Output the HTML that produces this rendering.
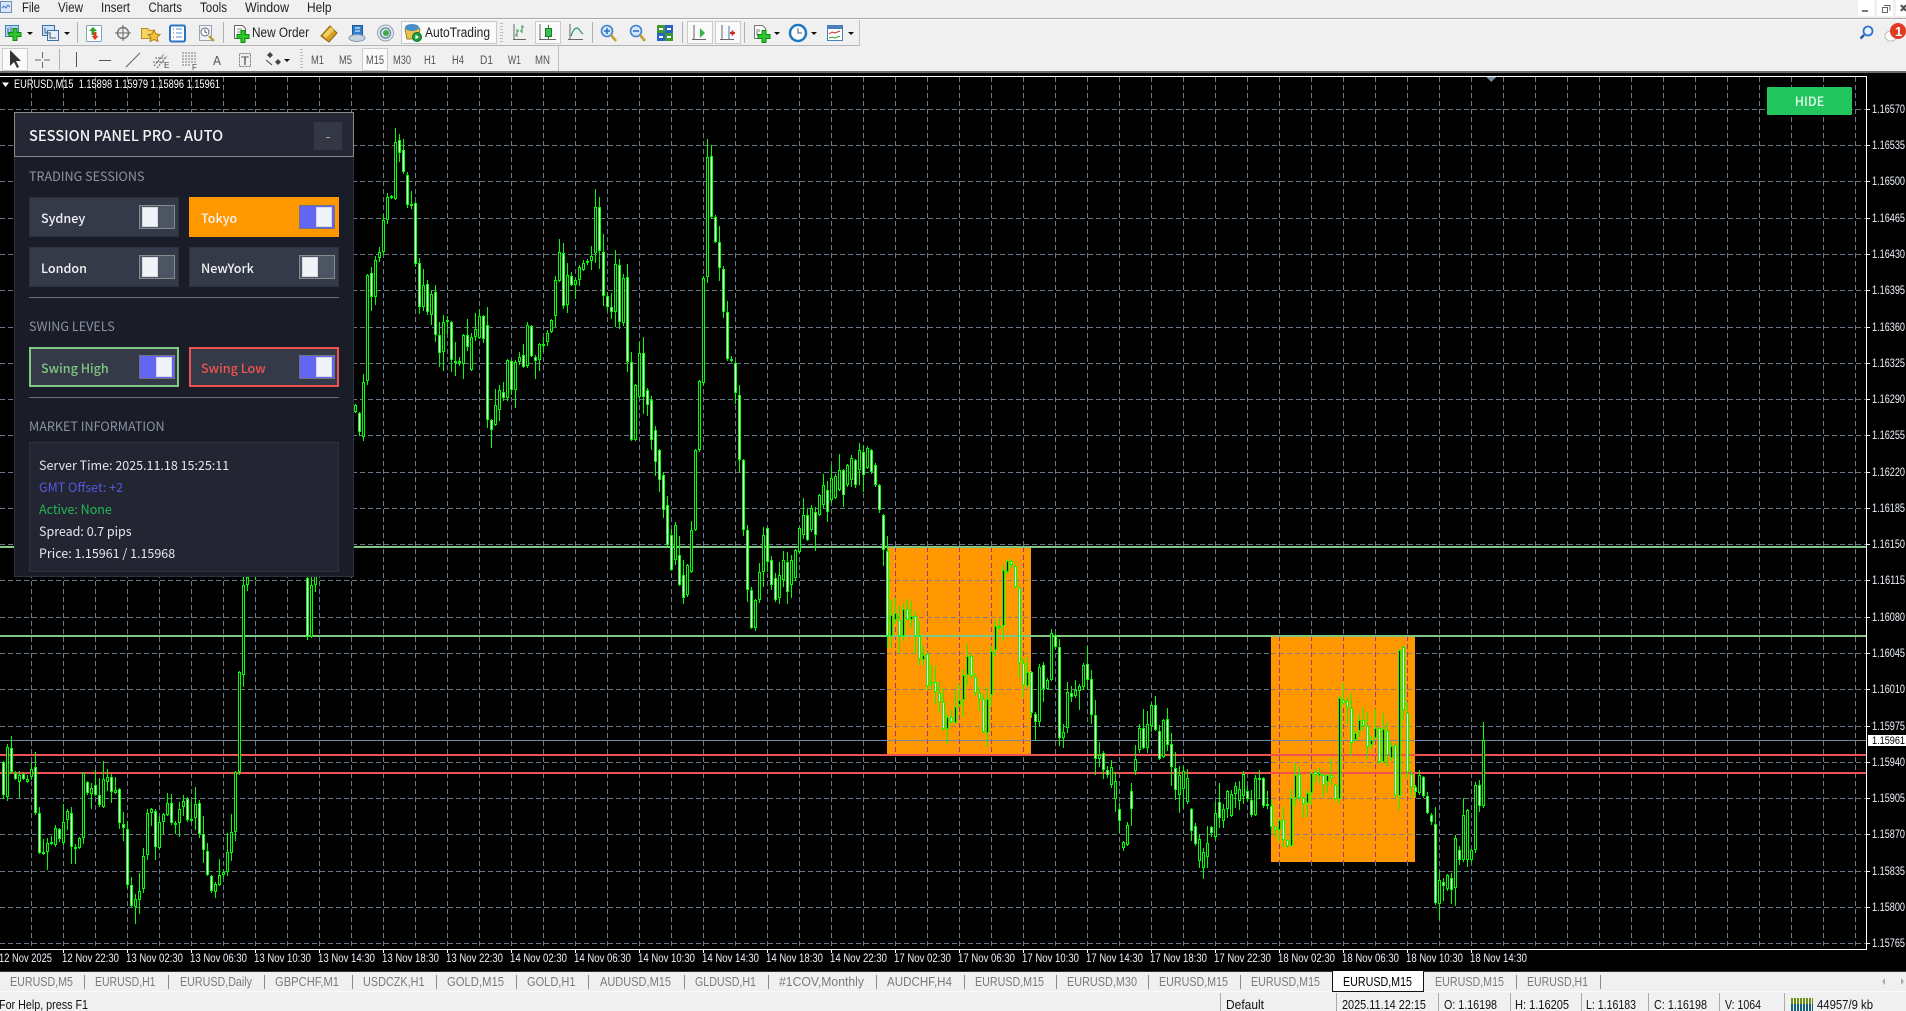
<!DOCTYPE html>
<html><head><meta charset="utf-8"><title>MetaTrader</title>
<style>
html,body{margin:0;padding:0;width:1906px;height:1011px;overflow:hidden;background:#f0f0f0}
svg{position:absolute;left:0;top:0}
svg text{font-family:"Liberation Sans",sans-serif}
.p{position:absolute;font-family:"Noto Sans CJK JP","Liberation Sans",sans-serif;white-space:nowrap;line-height:1}
.b{position:absolute;box-sizing:border-box;width:150px;height:40px;background:#353a48;border:1px solid #2d3140}
.t{position:absolute;box-sizing:border-box;width:36px;height:24px;background:#4b5563;border:1px solid #8a8a8a}
.t.on{background:#6366f1;border-color:#717384}
.t i{position:absolute;left:2px;top:1px;width:16px;height:20px;background:#f1f4f7;box-sizing:border-box;border:1px solid #d6dae0}
.t.on i{left:16px}
.l{position:absolute;left:29px;width:310px;height:1px;background:#6e6f72}
.h{font-size:12.6px;color:#8b93a3;left:29px}
.n{font-size:12.6px;font-weight:500;color:#f1f3f6}
.i{font-size:12.5px;color:#e5e7eb;left:39px}
</style></head>
<body>
<svg width="1906" height="1011" viewBox="0 0 1906 1011" xmlns="http://www.w3.org/2000/svg">
<defs>
<g id="plus"><path d="M-2-6h4v4h4v4h-4v4h-4v-4h-4v-4h4z" fill="#2fc62f" stroke="#0c8a0c"/></g>
<path id="dd" d="M0 0h6l-3 3z" fill="#111"/>
<pattern id="stg" width="3" height="3" patternUnits="userSpaceOnUse"><rect width="2" height="3" fill="#6f8f12"/></pattern>
<pattern id="stb" width="3" height="3" patternUnits="userSpaceOnUse"><rect width="2" height="3" fill="#14607a"/></pattern>
</defs>
<rect width="1906" height="1011" fill="#f0f0f0"/>
<!-- top chrome -->
<g shape-rendering="crispEdges">
<rect x="0" y="18" width="1906" height="1" fill="#a8a8a8"/>
<rect x="0" y="19" width="1906" height="1" fill="#fbfbfb"/>
<rect x="0" y="45" width="860" height="1" fill="#b4b4b4"/>
<rect x="859" y="20" width="1" height="26" fill="#c0c0c0"/>
<rect x="558" y="46" width="1" height="26" fill="#c0c0c0"/>
<rect x="0" y="71" width="1906" height="2" fill="#6c6c6c"/>
<rect x="1858" y="0" width="16" height="16" fill="#fff"/>
<rect x="1877" y="0" width="16" height="16" fill="#fff"/>
<rect x="1896" y="0" width="10" height="16" fill="#fff"/>
<rect x="1862" y="10" width="6" height="2" fill="#777"/>
<path d="M1884 5.500h6v5M1882.500 7.500h5v5h-5z" fill="none" stroke="#666"/>
<path d="M1901 5l5 6M1906 5l-5 6" stroke="#555" stroke-width="2"/>
</g>
<!-- app icon -->
<rect x="0.500" y="1.500" width="11" height="11" fill="#d8e6f6" stroke="#6a8fbf"/>
<path d="M2 8l2-2 2 2 2-3 2 2" fill="none" stroke="#3c78c0"/>
<g font-size="13.500" fill="#222">
<text x="22" y="12" textLength="18" lengthAdjust="spacingAndGlyphs">File</text>
<text x="58" y="12" textLength="25" lengthAdjust="spacingAndGlyphs">View</text>
<text x="101" y="12" textLength="29" lengthAdjust="spacingAndGlyphs">Insert</text>
<text x="148.500" y="12" textLength="33.500" lengthAdjust="spacingAndGlyphs">Charts</text>
<text x="200" y="12" textLength="27" lengthAdjust="spacingAndGlyphs">Tools</text>
<text x="245" y="12" textLength="44" lengthAdjust="spacingAndGlyphs">Window</text>
<text x="307" y="12" textLength="24.500" lengthAdjust="spacingAndGlyphs">Help</text>
</g>
<!-- toolbar 1 -->
<g shape-rendering="crispEdges" fill="#b0b0b0">
<rect x="77" y="22" width="1" height="21"/><rect x="223" y="22" width="1" height="21"/><rect x="592" y="22" width="1" height="21"/><rect x="682" y="22" width="1" height="21"/><rect x="744" y="22" width="1" height="21"/>
<rect x="59" y="49" width="1" height="21"/>
</g>
<g fill="#bdbdbd"><path d="M500 23h3v1h-3zM500 26h3v1h-3zM500 29h3v1h-3zM500 32h3v1h-3zM500 35h3v1h-3zM500 38h3v1h-3zM500 41h3v1h-3z"/><path d="M300 49h3v1h-3zM300 52h3v1h-3zM300 55h3v1h-3zM300 58h3v1h-3zM300 61h3v1h-3zM300 64h3v1h-3zM300 67h3v1h-3z"/></g>
<!-- new chart -->
<rect x="5.500" y="25.500" width="13" height="11" fill="#bcd8f4" stroke="#3f7fbf"/><path d="M8 28v6h8M11 27v5" stroke="#35659a" fill="none"/><use href="#plus" x="15" y="34.500"/>
<use href="#dd" x="27" y="32"/>
<!-- profiles -->
<rect x="42.500" y="25.500" width="12" height="10" fill="#cfe2f6" stroke="#3f6fa8"/><rect x="47.500" y="30.500" width="11" height="10" fill="#e4effa" stroke="#3f6fa8"/><path d="M45 28v5h6M50 33v5h6" stroke="#406080" fill="none"/>
<use href="#dd" x="64" y="32"/>
<!-- market watch -->
<rect x="86.500" y="25.500" width="15" height="16" rx="1" fill="#fff" stroke="#7fa0c0"/><path d="M93 27l-4 4h2.500v4h3v-4h2.500z" fill="#28a828"/><path d="M95 40l3.500-4h-2v-4h-3v4h-2z" fill="#d84020"/>
<!-- crosshair -->
<circle cx="123" cy="33" r="5.500" fill="none" stroke="#777" stroke-width="1.500"/><path d="M123 25v16M115 33h16" stroke="#666"/>
<!-- folder star -->
<path d="M141.500 28.500h6l2 2h5v8h-13z" fill="#f6d465" stroke="#b98d20"/><path d="M154 30l2 4 4 .5-3 3 1 4-4-2-4 2 1-4-3-3 4-.5z" fill="#f5c33a" stroke="#b07f1c"/>
<!-- navigator -->
<rect x="170" y="25.500" width="15" height="16" rx="1.500" fill="#fff" stroke="#2a74c8" stroke-width="2"/><path d="M173 29h1M173 33h1M173 37h1" stroke="#d04030"/><path d="M176 29h6M176 33h6M176 37h6" stroke="#5a90d0"/>
<!-- tester -->
<rect x="199.500" y="25.500" width="12" height="15" fill="#eef2f6" stroke="#98a4b0"/><circle cx="205" cy="32" r="4" fill="#fff" stroke="#667"/><path d="M205 29.500V32l2 1" stroke="#555" fill="none"/><path d="M209 36l5 5" stroke="#c59a30" stroke-width="2.500"/>
<!-- new order -->
<path d="M234.500 25.500h8l3 3v10h-11z" fill="#fff" stroke="#666"/><path d="M237 29h5M237 32h6M237 35h4" stroke="#888"/><use href="#plus" x="243" y="36.500"/>
<text x="252" y="37" font-size="13.500" fill="#222" textLength="57" lengthAdjust="spacingAndGlyphs">New Order</text>
<!-- gold -->
<path d="M321 36l9-10 7 7-8 9z" fill="#d8a020" stroke="#8a6210"/><path d="M323 35l8-8 3 3-8 8z" fill="#f2cf60"/>
<!-- metaeditor/cloud -->
<rect x="352.500" y="25.500" width="10" height="11" fill="#2f7fd0" stroke="#1c5a9c"/><path d="M355 28h5M355 31h5" stroke="#fff"/><ellipse cx="357" cy="38" rx="8" ry="3.500" fill="#c8d4e0" stroke="#8497a8"/>
<!-- signal -->
<circle cx="385.500" cy="33" r="8" fill="#dfe8ef" stroke="#8fa4b4"/><circle cx="385.500" cy="33" r="5" fill="none" stroke="#7090a8" stroke-width="1.500"/><circle cx="386" cy="33" r="3" fill="#40a848"/>
<!-- autotrading -->
<rect x="401.500" y="21.500" width="95" height="22" fill="#fafafa" stroke="#c8c8c8" shape-rendering="crispEdges"/>
<path d="M405 29c5-5 11-5 15 0l-2 10h-11z" fill="#e8c24a" stroke="#9a8024"/><ellipse cx="412" cy="27.500" rx="7" ry="3.500" fill="#4a8cc8"/><circle cx="417" cy="37" r="4.500" fill="#20a040" stroke="#0c7028"/><path d="M415.500 34.800v4.500l3.500-2.200z" fill="#fff"/>
<text x="425" y="37" font-size="13.500" fill="#222" textLength="65" lengthAdjust="spacingAndGlyphs">AutoTrading</text>
<!-- bar chart -->
<path d="M514 24v16M513 39.500h13" stroke="#666" fill="none"/><path d="M517 37v-8M515 35h2M517 31h2M522 33v-8M520 31h2M522 27h2" stroke="#2a9a4a" fill="none"/>
<rect x="535.500" y="21.500" width="25" height="22" fill="#fafafa" stroke="#cccccc" shape-rendering="crispEdges"/>
<path d="M540 24v16M539 39.500h17" stroke="#666" fill="none"/><rect x="545.500" y="28.500" width="6" height="8" fill="#38c050" stroke="#1a7a30"/><path d="M548.500 25v3M548.500 37v2" stroke="#1a7a30"/>
<path d="M570 24v16M568 39.500h15" stroke="#666" fill="none"/><path d="M571 36c2-6 4-8 6-8s3 4 6 6" stroke="#2a9a6a" fill="none" stroke-width="1.200"/>
<!-- zoom -->
<circle cx="607" cy="31" r="5.500" fill="#cfe6fb" stroke="#3f82c8" stroke-width="1.600"/><path d="M604 31h6M607 28v6" stroke="#2a6cb8" stroke-width="1.500"/><path d="M611 35l5 6" stroke="#c8a030" stroke-width="2.600"/>
<circle cx="636" cy="31" r="5.500" fill="#cfe6fb" stroke="#3f82c8" stroke-width="1.600"/><path d="M633 31h6" stroke="#2a6cb8" stroke-width="1.500"/><path d="M640 35l5 6" stroke="#c8a030" stroke-width="2.600"/>
<!-- tile -->
<rect x="657" y="25" width="8" height="8" fill="#3c9a30"/><rect x="665" y="25" width="8" height="8" fill="#2a62c8"/><rect x="657" y="33" width="8" height="8" fill="#2a62c8"/><rect x="665" y="33" width="8" height="8" fill="#3c9a30"/><path d="M659 29h4M667 29h4M659 37h4M667 37h4" stroke="#fff" stroke-width="2"/>
<!-- shift / autoscroll -->
<rect x="687.500" y="21.500" width="25" height="22" fill="#fafafa" stroke="#cccccc" shape-rendering="crispEdges"/>
<path d="M694 25v15M692 39.500h14" stroke="#666" fill="none"/><path d="M700 28v10l5-5z" fill="#39b54a"/>
<rect x="715.500" y="21.500" width="25" height="22" fill="#fafafa" stroke="#cccccc" shape-rendering="crispEdges"/>
<path d="M722 25v15M720 39.500h14" stroke="#666" fill="none"/><path d="M729 26v13" stroke="#3a78c0"/><path d="M730 33h5M732.500 30.500v5" stroke="#c83020" stroke-width="2"/>
<!-- add indicator -->
<path d="M754.500 25.500h8l3 3v10h-11z" fill="#fff" stroke="#777"/><path d="M757 29v6h5M759 29v3" stroke="#777" fill="none"/><use href="#plus" x="764" y="36.500"/><use href="#dd" x="774" y="32"/>
<!-- clock -->
<circle cx="798" cy="33" r="8" fill="#fff" stroke="#1d78c4" stroke-width="2.500"/><path d="M798 28v5h4" stroke="#556" fill="none"/><use href="#dd" x="811" y="32"/>
<!-- templates -->
<rect x="827.500" y="25.500" width="15" height="15" fill="#fff" stroke="#4a7fb8"/><rect x="828" y="26" width="14" height="3" fill="#4a80c0"/><path d="M829 34l3-2 3 1 5-2" stroke="#c83020" fill="none"/><path d="M829 38l3-1 3 1 5-2" stroke="#30a040" fill="none"/><use href="#dd" x="848" y="32"/>
<!-- toolbar 2 -->
<rect x="2.500" y="48.500" width="25" height="22" fill="#fafafa" stroke="#cccccc" shape-rendering="crispEdges"/>
<path d="M10 50v16l4-4 3 6 2-1-3-6h5z" fill="#333"/>
<path d="M42.500 52v6M42.500 62v6M35 60h6M44 60h6" stroke="#666"/>
<path d="M76.500 52v15" stroke="#555"/>
<path d="M99 60.500h12" stroke="#555"/>
<path d="M126 67l14-14" stroke="#666"/>
<path d="M154 66l10-12M157 68l10-12M153 62h12M155 58h12" stroke="#666" fill="none" stroke-dasharray="2 1"/>
<text x="164" y="68" font-size="8" fill="#444">E</text>
<path d="M182 53h14M182 56h14M182 59h14M182 62h14M182 65h8" stroke="#777" stroke-dasharray="2 1"/>
<text x="192" y="70" font-size="8" fill="#444">F</text>
<text x="213" y="65" font-size="13" fill="#555" textLength="8" lengthAdjust="spacingAndGlyphs">A</text>
<rect x="239.500" y="53.500" width="11" height="13" fill="none" stroke="#777" stroke-dasharray="2 1"/><text x="241" y="65" font-size="12" fill="#444" textLength="8" lengthAdjust="spacingAndGlyphs">T</text>
<path d="M267 55l3-3 3 3-3 3zM275 62l3-3 3 3-3 3z" fill="#444"/><path d="M266 60l6 5" stroke="#444"/>
<use href="#dd" x="284" y="59"/>
<rect x="362.500" y="48.500" width="25" height="22" fill="#fafafa" stroke="#cccccc" shape-rendering="crispEdges"/>
<g font-size="11.500" fill="#555">
<text x="311" y="64" textLength="13" lengthAdjust="spacingAndGlyphs">M1</text>
<text x="339" y="64" textLength="13" lengthAdjust="spacingAndGlyphs">M5</text>
<text x="366" y="64" textLength="18" lengthAdjust="spacingAndGlyphs">M15</text>
<text x="393" y="64" textLength="18" lengthAdjust="spacingAndGlyphs">M30</text>
<text x="424" y="64" textLength="12" lengthAdjust="spacingAndGlyphs">H1</text>
<text x="452" y="64" textLength="12" lengthAdjust="spacingAndGlyphs">H4</text>
<text x="480" y="64" textLength="13" lengthAdjust="spacingAndGlyphs">D1</text>
<text x="508" y="64" textLength="13" lengthAdjust="spacingAndGlyphs">W1</text>
<text x="535" y="64" textLength="15" lengthAdjust="spacingAndGlyphs">MN</text>
</g>
<!-- right icons -->
<circle cx="1868" cy="31" r="4.500" fill="#eef5fc" stroke="#2f74d0" stroke-width="1.800"/><path d="M1864 35l-3.500 3.500" stroke="#2558b0" stroke-width="2.500"/>
<ellipse cx="1891" cy="36" rx="6" ry="5" fill="#fff" stroke="#bbb"/><path d="M1888 40l-1 3 4-2z" fill="#ddd"/>
<circle cx="1898" cy="31" r="8" fill="#e03a20"/><text x="1895" y="36" font-size="13" fill="#fff" font-weight="bold">1</text>
<!-- chart -->
<rect x="0" y="73" width="1906" height="898" fill="#000"/>
<g shape-rendering="crispEdges">
<path id="gr" fill="none" stroke="#6a7a8a" stroke-dasharray="5 3"/>
<rect x="887" y="547" width="144" height="207" fill="#ff9800"/>
<rect x="1271" y="636" width="144" height="226" fill="#ff9800"/>
<path d="M887 580.500h144M887 617.500h144M887 653.500h144M887 689.500h144M887 726.500h144M1271 653.500h144M1271 689.500h144M1271 726.500h144M1271 762.500h144M1271 798.500h144M1271 834.500h144" stroke="#8c8078" stroke-dasharray="5 3" fill="none"/>
<path d="M895.500 547V754M927.500 547V754M959.500 547V754M991.500 547V754M1023.500 547V754M1279.500 636V862M1311.500 636V862M1343.500 636V862M1375.500 636V862M1407.500 636V862" stroke="#9a3a90" stroke-dasharray="5 3" fill="none"/>
<rect x="0" y="546" width="1866" height="2" fill="#81c784"/>
<rect x="0" y="635" width="1866" height="2" fill="#81c784"/>
<rect x="0" y="740" width="1866" height="1" fill="#778899"/>
<rect x="0" y="754" width="1866" height="2" fill="#ef5350"/>
<rect x="0" y="772" width="1866" height="2" fill="#ef5350"/>
<path id="wk" fill="none" stroke="#00ff00"/>
<path id="bd" fill="#00ff00"/>
<path id="bw" fill="#ffffff"/>
<path id="bk" fill="#000000"/>
<rect x="0" y="76" width="1867" height="1" fill="#fff"/>
<rect x="0" y="949" width="1867" height="1" fill="#fff"/>
<rect x="1866" y="76" width="1" height="874" fill="#fff"/>
<path id="tk" fill="none" stroke="#fff"/>
<path d="M1486 77h10l-5 5z" fill="#778899"/>
</g>
<path d="M2 82.500h7l-3.500 4.500z" fill="#fff"/>
<text x="14" y="88" font-size="11.500" fill="#fff" textLength="206" lengthAdjust="spacingAndGlyphs" xml:space="preserve">EURUSD,M15  1.15898 1.15979 1.15896 1.15961</text>
<!-- price axis -->
<g font-size="11.500" fill="#eef3fa">
<text x="1872" y="113" textLength="33" lengthAdjust="spacingAndGlyphs">1.16570</text>
<text x="1872" y="149" textLength="33" lengthAdjust="spacingAndGlyphs">1.16535</text>
<text x="1872" y="185" textLength="33" lengthAdjust="spacingAndGlyphs">1.16500</text>
<text x="1872" y="222" textLength="33" lengthAdjust="spacingAndGlyphs">1.16465</text>
<text x="1872" y="258" textLength="33" lengthAdjust="spacingAndGlyphs">1.16430</text>
<text x="1872" y="294" textLength="33" lengthAdjust="spacingAndGlyphs">1.16395</text>
<text x="1872" y="331" textLength="33" lengthAdjust="spacingAndGlyphs">1.16360</text>
<text x="1872" y="367" textLength="33" lengthAdjust="spacingAndGlyphs">1.16325</text>
<text x="1872" y="403" textLength="33" lengthAdjust="spacingAndGlyphs">1.16290</text>
<text x="1872" y="439" textLength="33" lengthAdjust="spacingAndGlyphs">1.16255</text>
<text x="1872" y="476" textLength="33" lengthAdjust="spacingAndGlyphs">1.16220</text>
<text x="1872" y="512" textLength="33" lengthAdjust="spacingAndGlyphs">1.16185</text>
<text x="1872" y="548" textLength="33" lengthAdjust="spacingAndGlyphs">1.16150</text>
<text x="1872" y="584" textLength="33" lengthAdjust="spacingAndGlyphs">1.16115</text>
<text x="1872" y="621" textLength="33" lengthAdjust="spacingAndGlyphs">1.16080</text>
<text x="1872" y="657" textLength="33" lengthAdjust="spacingAndGlyphs">1.16045</text>
<text x="1872" y="693" textLength="33" lengthAdjust="spacingAndGlyphs">1.16010</text>
<text x="1872" y="730" textLength="33" lengthAdjust="spacingAndGlyphs">1.15975</text>
<text x="1872" y="766" textLength="33" lengthAdjust="spacingAndGlyphs">1.15940</text>
<text x="1872" y="802" textLength="33" lengthAdjust="spacingAndGlyphs">1.15905</text>
<text x="1872" y="838" textLength="33" lengthAdjust="spacingAndGlyphs">1.15870</text>
<text x="1872" y="875" textLength="33" lengthAdjust="spacingAndGlyphs">1.15835</text>
<text x="1872" y="911" textLength="33" lengthAdjust="spacingAndGlyphs">1.15800</text>
<text x="1872" y="947" textLength="33" lengthAdjust="spacingAndGlyphs">1.15765</text>
</g>
<rect x="1868" y="735" width="38" height="11" fill="#fff" shape-rendering="crispEdges"/>
<text x="1872" y="744" font-size="11" fill="#000" textLength="33" lengthAdjust="spacingAndGlyphs">1.15961</text>
<!-- time axis -->
<g font-size="11.500" fill="#eef3fa">
<text x="-1" y="962" textLength="53" lengthAdjust="spacingAndGlyphs">12 Nov 2025</text>
<text x="62" y="962" textLength="57" lengthAdjust="spacingAndGlyphs">12 Nov 22:30</text>
<text x="126" y="962" textLength="57" lengthAdjust="spacingAndGlyphs">13 Nov 02:30</text>
<text x="190" y="962" textLength="57" lengthAdjust="spacingAndGlyphs">13 Nov 06:30</text>
<text x="254" y="962" textLength="57" lengthAdjust="spacingAndGlyphs">13 Nov 10:30</text>
<text x="318" y="962" textLength="57" lengthAdjust="spacingAndGlyphs">13 Nov 14:30</text>
<text x="382" y="962" textLength="57" lengthAdjust="spacingAndGlyphs">13 Nov 18:30</text>
<text x="446" y="962" textLength="57" lengthAdjust="spacingAndGlyphs">13 Nov 22:30</text>
<text x="510" y="962" textLength="57" lengthAdjust="spacingAndGlyphs">14 Nov 02:30</text>
<text x="574" y="962" textLength="57" lengthAdjust="spacingAndGlyphs">14 Nov 06:30</text>
<text x="638" y="962" textLength="57" lengthAdjust="spacingAndGlyphs">14 Nov 10:30</text>
<text x="702" y="962" textLength="57" lengthAdjust="spacingAndGlyphs">14 Nov 14:30</text>
<text x="766" y="962" textLength="57" lengthAdjust="spacingAndGlyphs">14 Nov 18:30</text>
<text x="830" y="962" textLength="57" lengthAdjust="spacingAndGlyphs">14 Nov 22:30</text>
<text x="894" y="962" textLength="57" lengthAdjust="spacingAndGlyphs">17 Nov 02:30</text>
<text x="958" y="962" textLength="57" lengthAdjust="spacingAndGlyphs">17 Nov 06:30</text>
<text x="1022" y="962" textLength="57" lengthAdjust="spacingAndGlyphs">17 Nov 10:30</text>
<text x="1086" y="962" textLength="57" lengthAdjust="spacingAndGlyphs">17 Nov 14:30</text>
<text x="1150" y="962" textLength="57" lengthAdjust="spacingAndGlyphs">17 Nov 18:30</text>
<text x="1214" y="962" textLength="57" lengthAdjust="spacingAndGlyphs">17 Nov 22:30</text>
<text x="1278" y="962" textLength="57" lengthAdjust="spacingAndGlyphs">18 Nov 02:30</text>
<text x="1342" y="962" textLength="57" lengthAdjust="spacingAndGlyphs">18 Nov 06:30</text>
<text x="1406" y="962" textLength="57" lengthAdjust="spacingAndGlyphs">18 Nov 10:30</text>
<text x="1470" y="962" textLength="57" lengthAdjust="spacingAndGlyphs">18 Nov 14:30</text>
</g>
<!-- tabs -->
<g shape-rendering="crispEdges">
<rect x="0" y="971" width="1906" height="1" fill="#333"/>
<rect x="0" y="972" width="1906" height="19" fill="#f0f0f0"/>
<rect x="0" y="991" width="1906" height="1" fill="#fbfbfb"/>
<rect x="1332" y="971" width="92" height="21" fill="#111"/>
<rect x="1333" y="971" width="90" height="20" fill="#fff"/>
<path d="M84.500 975v14M168.500 975v14M264.500 975v14M352.500 975v14M436.500 975v14M516.500 975v14M588.500 975v14M684.500 975v14M768.500 975v14M876.500 975v14M964.500 975v14M1056.500 975v14M1148.500 975v14M1240.500 975v14M1516.500 975v14M1600.500 975v14" stroke="#8a8a8a"/>
<path d="M1220.500 993v18M1336.500 993v18M1438.500 993v18M1510.500 993v18M1581.500 993v18M1648.500 993v18M1719.500 993v18M1784.500 993v18" stroke="#aaa"/>
<rect x="1790" y="998" width="23" height="6" fill="url(#stg)"/>
<rect x="1790" y="1004" width="23" height="7" fill="url(#stb)"/>
</g>
<path d="M1885 978v7l-3-3.500zM1901 978v7l3-3.500z" fill="#aaa"/>
<g font-size="13" fill="#7a7a7a">
<text x="10" y="986" textLength="63" lengthAdjust="spacingAndGlyphs">EURUSD,M5</text>
<text x="95" y="986" textLength="60.500" lengthAdjust="spacingAndGlyphs">EURUSD,H1</text>
<text x="180" y="986" textLength="72" lengthAdjust="spacingAndGlyphs">EURUSD,Daily</text>
<text x="275" y="986" textLength="64" lengthAdjust="spacingAndGlyphs">GBPCHF,M1</text>
<text x="363" y="986" textLength="61.500" lengthAdjust="spacingAndGlyphs">USDCZK,H1</text>
<text x="447" y="986" textLength="57" lengthAdjust="spacingAndGlyphs">GOLD,M15</text>
<text x="527" y="986" textLength="48.500" lengthAdjust="spacingAndGlyphs">GOLD,H1</text>
<text x="600" y="986" textLength="71" lengthAdjust="spacingAndGlyphs">AUDUSD,M15</text>
<text x="695" y="986" textLength="61" lengthAdjust="spacingAndGlyphs">GLDUSD,H1</text>
<text x="779" y="986" textLength="85" lengthAdjust="spacingAndGlyphs">#1COV,Monthly</text>
<text x="887" y="986" textLength="65" lengthAdjust="spacingAndGlyphs">AUDCHF,H4</text>
<text x="975" y="986" textLength="69" lengthAdjust="spacingAndGlyphs">EURUSD,M15</text>
<text x="1067" y="986" textLength="70" lengthAdjust="spacingAndGlyphs">EURUSD,M30</text>
<text x="1159" y="986" textLength="69" lengthAdjust="spacingAndGlyphs">EURUSD,M15</text>
<text x="1251" y="986" textLength="69" lengthAdjust="spacingAndGlyphs">EURUSD,M15</text>
<text x="1343" y="986" textLength="69" lengthAdjust="spacingAndGlyphs" fill="#000">EURUSD,M15</text>
<text x="1435" y="986" textLength="69" lengthAdjust="spacingAndGlyphs">EURUSD,M15</text>
<text x="1527" y="986" textLength="61" lengthAdjust="spacingAndGlyphs">EURUSD,H1</text>
</g>
<g font-size="13" fill="#111">
<text x="-1" y="1009" textLength="89" lengthAdjust="spacingAndGlyphs">For Help, press F1</text>
<text x="1226" y="1009" textLength="38" lengthAdjust="spacingAndGlyphs">Default</text>
<text x="1342" y="1009" textLength="84" lengthAdjust="spacingAndGlyphs">2025.11.14 22:15</text>
<text x="1444" y="1009" textLength="53" lengthAdjust="spacingAndGlyphs">O: 1.16198</text>
<text x="1515" y="1009" textLength="54" lengthAdjust="spacingAndGlyphs">H: 1.16205</text>
<text x="1586" y="1009" textLength="50" lengthAdjust="spacingAndGlyphs">L: 1.16183</text>
<text x="1654" y="1009" textLength="53" lengthAdjust="spacingAndGlyphs">C: 1.16198</text>
<text x="1725" y="1009" textLength="36" lengthAdjust="spacingAndGlyphs">V: 1064</text>
<text x="1817" y="1009" textLength="56" lengthAdjust="spacingAndGlyphs">44957/9 kb</text>
</g>
</svg>

<!-- HIDE button -->
<div style="position:absolute;left:1767px;top:87px;width:85px;height:28px;background:#22c55e;border-radius:1px"></div>
<div class="p" style="left:1767px;top:95px;width:85px;text-align:center;font-size:12.6px;font-weight:500;color:#e6f7ec">HIDE</div>

<!-- Session panel -->
<div style="position:absolute;left:14px;top:112px;width:340px;height:465px;background:#1a1d28;box-sizing:border-box;border:1px solid #2d3140"></div>
<div style="position:absolute;left:14px;top:112px;width:340px;height:45px;background:#252834;box-sizing:border-box;border:1px solid #8a8a8a"></div>
<div class="p" style="left:29px;top:129px;font-size:14.6px;font-weight:500;color:#f3f4f6">SESSION PANEL PRO - AUTO</div>
<div style="position:absolute;left:314px;top:122px;width:28px;height:28px;background:#343845;border-radius:2px"></div>
<div class="p" style="left:314px;top:129px;width:28px;text-align:center;font-size:13px;color:#b8bcc6">-</div>

<div class="p h" style="top:170px">TRADING SESSIONS</div>
<div class="b" style="left:29px;top:197px"></div>
<div class="p n" style="left:41px;top:212px">Sydney</div>
<div class="t" style="left:139px;top:205px"><i></i></div>
<div class="b" style="left:189px;top:197px;background:#ff9800;border-color:#ff9800"></div>
<div class="p n" style="left:201px;top:212px">Tokyo</div>
<div class="t on" style="left:299px;top:205px"><i></i></div>
<div class="b" style="left:29px;top:247px"></div>
<div class="p n" style="left:41px;top:262px">London</div>
<div class="t" style="left:139px;top:255px"><i></i></div>
<div class="b" style="left:189px;top:247px"></div>
<div class="p n" style="left:201px;top:262px">NewYork</div>
<div class="t" style="left:299px;top:255px"><i></i></div>
<div class="l" style="top:297px"></div>

<div class="p h" style="top:320px">SWING LEVELS</div>
<div class="b" style="left:29px;top:347px;border:2px solid #81c784"></div>
<div class="p n" style="left:41px;top:362px;color:#81c784">Swing High</div>
<div class="t on" style="left:139px;top:355px"><i></i></div>
<div class="b" style="left:189px;top:347px;border:2px solid #ef5350"></div>
<div class="p n" style="left:201px;top:362px;color:#ef5350">Swing Low</div>
<div class="t on" style="left:299px;top:355px"><i></i></div>
<div class="l" style="top:397px"></div>

<div class="p h" style="top:420px">MARKET INFORMATION</div>
<div style="position:absolute;left:29px;top:442px;width:310px;height:130px;background:#232632;box-sizing:border-box;border:1px solid #2d3140"></div>
<div class="p i" style="top:459px">Server Time: 2025.11.18 15:25:11</div>
<div class="p i" style="top:481px;color:#5558e0">GMT Offset: +2</div>
<div class="p i" style="top:503px;color:#22b855">Active: None</div>
<div class="p i" style="top:525px">Spread: 0.7 pips</div>
<div class="p i" style="top:547px">Price: 1.15961 / 1.15968</div>

<script>
(function(){
var ys=[109,145,181,218,254,290,327,363,399,435,472,508,544,580,617,653,689,726,762,798,834,871,907,943];
var g='',t='',i,x;
for(i=0;i<ys.length;i++){g+='M0 '+ys[i]+'.5H1866';t+='M1866 '+ys[i]+'.5h4';}
for(i=0;i<=57;i++){x=31+32*i;g+='M'+x+'.5 77V949';}
for(i=0;i<=22;i++){t+='M'+(63+64*i)+'.5 949v4';}
document.getElementById('gr').setAttribute('d',g);
document.getElementById('tk').setAttribute('d',t);
var D="3:762:795:1 7:747:797:0 11:748:772:1 15:773:779:1 19:775:782:0 23:774:779:1 27:779:782:0 31:769:777:0 35:767:813:1 39:813:853:1 43:852:853:1 47:843:852:0 51:842:843:1 55:828:845:0 59:829:839:1 63:822:843:0 67:811:820:0 71:813:847:1 75:847:848:1 79:838:848:0 83:773:838:0 87:782:793:1 91:788:794:0 95:785:795:1 99:795:805:1 103:779:807:0 107:777:782:0 111:777:792:1 115:790:793:0 119:789:823:1 123:824:828:1 127:829:885:1 131:885:906:1 135:899:907:0 139:891:900:0 143:856:889:0 147:813:855:0 151:809:813:0 155:811:847:1 159:822:848:0 163:814:822:0 167:803:815:0 171:803:823:1 175:823:824:1 179:809:823:0 183:801:807:0 187:799:820:1 191:819:820:1 195:804:818:0 199:803:834:1 203:834:850:1 207:851:875:1 211:876:891:1 215:884:892:0 219:875:885:0 223:872:875:0 227:852:872:0 231:832:853:0 235:772:832:0 239:672:772:0 243:585:675:0 247:577:585:0 "+
"251:555 255:555 259:555 263:555 267:560 271:560 275:555 279:555 283:555 287:555 291:555 295:555 299:555 303:555 307:578:637:1 311:585:637:0 315:560:585:0 319:530 323:530 327:520 331:520 335:500 339:490 343:470 347:450 351:430 "+
"355:405:412:0 359:413:432:1 363:382:437:0 367:275:381:0 371:273:297:1 375:260:297:0 379:252:258:0 383:220:252:0 387:197:220:0 391:196:198:0 395:142:199:0 399:140:153:1 403:150:172:1 407:175:205:1 411:204:206:1 415:203:264:1 419:263:307:1 423:285:307:0 427:284:312:1 431:294:315:0 435:292:335:1 439:335:353:1 443:322:352:0 447:320:322:0 451:322:360:1 455:361:362:1 459:361:362:0 463:335:364:0 467:335:347:1 471:337:370:0 475:329:337:0 479:316:338:0 483:316:339:1 487:325:420:1 491:420:430:1 495:405:425:0 499:390:410:0 503:392:398:1 507:360:398:0 511:361:390:1 515:362:390:0 519:357:362:0 523:355:367:1 527:325:366:0 531:326:356:1 535:357:361:1 539:344:360:0 543:344:346:0 547:333:342:0 551:320:332:0 555:280:316:0 559:252:281:0 563:253:306:1 567:275:305:0 571:276:285:1 575:280:285:0 579:267:280:0 583:263:270:0 587:261:263:0 591:256:261:0 595:207:253:0 599:207:251:1 603:252:296:1 607:296:307:1 611:307:312:1 615:264:312:0 619:265:322:1 623:278:323:0 627:277:362:1 631:362:440:1 635:385:440:0 639:353:397:0 643:353:397:1 647:390:405:1 651:400:440:1 "+
"655:430:462:1 659:450:480:1 663:475:510:1 667:505:545:1 671:535:570:1 675:525:560:0 679:555:585:1 683:575:598:1 687:565:595:0 691:530:572:0 695:450:530:0 699:381:450:0 703:278:383:0 707:157:277:0 711:156:217:1 715:217:242:1 719:242:268:1 723:269:312:1 727:312:359:1 731:359:361:1 735:363:393:1 "+
"739:395:460:1 743:460:530:1 747:530:590:1 751:590:628:1 755:600:628:0 759:572:600:0 763:535:572:0 767:528:562:1 771:560:585:1 775:578:600:1 779:575:598:0 783:560:580:0 787:562:592:1 791:560:585:0 795:550:578:0 799:528:552:0 803:515:535:0 807:515:540:1 811:508:530:0 815:512:535:1 819:495:515:0 823:485:505:0 827:490:512:1 831:478:500:0 835:476:498:0 839:470:490:0 843:470:495:1 847:465:485:0 851:458:480:0 855:460:485:1 859:450:470:0 863:452:475:1 867:448:468:0 871:450:472:1 875:465:485:1 879:485:510:1 "+
"883:515:550:1 887:551:636:1 891:615:636:0 895:613:620:0 899:620:636:1 903:609:636:0 907:609:620:1 911:616:620:0 915:616:636:1 919:636:659:1 923:655:660:0 927:654:686:1 931:682:684:0 935:682:692:1 939:693:702:1 943:702:729:1 947:717:729:0 951:717:722:1 955:707:723:0 959:700:705:0 963:675:700:0 967:656:675:0 971:656:676:1 975:677:693:1 979:693:699:1 983:699:732:1 987:699:733:0 991:651:695:0 995:626:650:0 999:626:627:0 1003:570:626:0 1007:561:572:0 1011:561:565:1 1015:566:587:1 1019:588:663:1 1023:663:685:1 1027:672:686:0 1031:672:713:1 1035:714:722:1 1039:667:722:0 1043:665:689:1 1047:680:689:0 1051:633:680:0 1055:635:647:1 1059:647:738:1 1063:732:738:0 1067:692:728:0 1071:693:697:1 1075:690:696:0 1079:686:691:0 1083:665:687:0 1087:664:680:1 1091:679:715:1 1095:715:759:1 1099:755:759:0 1103:753:770:1 1107:770:775:1 1111:767:785:0 "+
"1115:790 1119:815 1123:845 1127:835 1131:800 1135:765 1139:728:750:0 1143:728:748:1 1147:724:748:0 1151:705:726:0 1155:705:730:1 1159:731:759:1 1163:720:757:0 1167:719:745:1 1171:744:767:1 1175:768:790:1 1179:775:795:0 "+
"1183:780 1187:790 1191:820 1195:835 1199:850 1203:860 1207:850 1211:830 1215:825 1219:810 1223:815 1227:800 1231:805 1235:790 1239:795 1243:785 1247:795 "+
"1251:800:815:1 1255:778:815:0 1259:778:780:1 1263:778:806:1 1267:804:806:0 1271:806:827:1 1275:827:830:1 1279:820:830:0 1283:820:840:1 1287:840:846:1 1291:798:846:0 1295:775:798:0 1299:774:798:1 1303:798:804:1 1307:793:803:0 1311:773:793:0 1315:772:775:1 1319:773:776:0 1323:775:785:1 1327:775:782:0 1331:775:778:1 1335:785:799:1 1339:698:799:0 1343:700:703:1 1347:701:707:1 1351:708:743:1 1355:733:740:0 1359:720:731:0 1363:720:726:1 1367:726:747:1 1371:740:745:0 1375:728:738:0 1379:728:762:1 1383:729:762:0 1387:731:755:1 1391:746:758:0 1395:745:795:1 1399:650:796:0 1403:647:710:1 1407:713:772:1 1411:774:787:1 1415:787:792:1 1419:775:793:0 1423:777:796:1 1427:796:813:1 1431:815:822:1 1435:824:903:1 1439:880:904:0 1443:882:886:1 1447:875:889:0 1451:878:890:1 1455:838:888:0 1459:850:860:1 1463:815:860:0 1467:810:860:0 1471:850:860:0 1475:785:850:0 1479:785:806:1 1483:740:806:0";
function r(n){var s=Math.sin(n*12.9898)*43758.5453;return s-Math.floor(s);}
var w='',b='',wh='',bk='';
D.split(' ').forEach(function(tk,idx){
 var a=tk.split(':').map(Number),X=a[0],T,B,Be;
 if(a.length<4){var h=6+r(X)*18;T=Math.round(a[1]-h/2);B=Math.round(a[1]+h/2);Be=r(X+7)>.5;}
 else{T=a[1];B=a[2];Be=a[3]==1;}
 if(B-T<2)B=T+2;
 var r1=r(X*1.3+1),r2=r(X*1.7+2);
 var hi=Math.round(T-r1*r1*18-1),lo=Math.round(B+r2*r2*18+1);
 if(X==1483){hi=722;lo=808;}
 w+='M'+X+'.5 '+hi+'V'+lo;
 b+='M'+(X-1)+' '+T+'h3v'+(B-T)+'h-3z';
 if(B-T>2){var p='M'+X+' '+(T+1)+'h1v'+(B-T-2)+'h-1z';if(Be)wh+=p;else bk+=p;}
});
document.getElementById('wk').setAttribute('d',w);
document.getElementById('bd').setAttribute('d',b);
document.getElementById('bw').setAttribute('d',wh);
document.getElementById('bk').setAttribute('d',bk);
})();
</script>
</body></html>
